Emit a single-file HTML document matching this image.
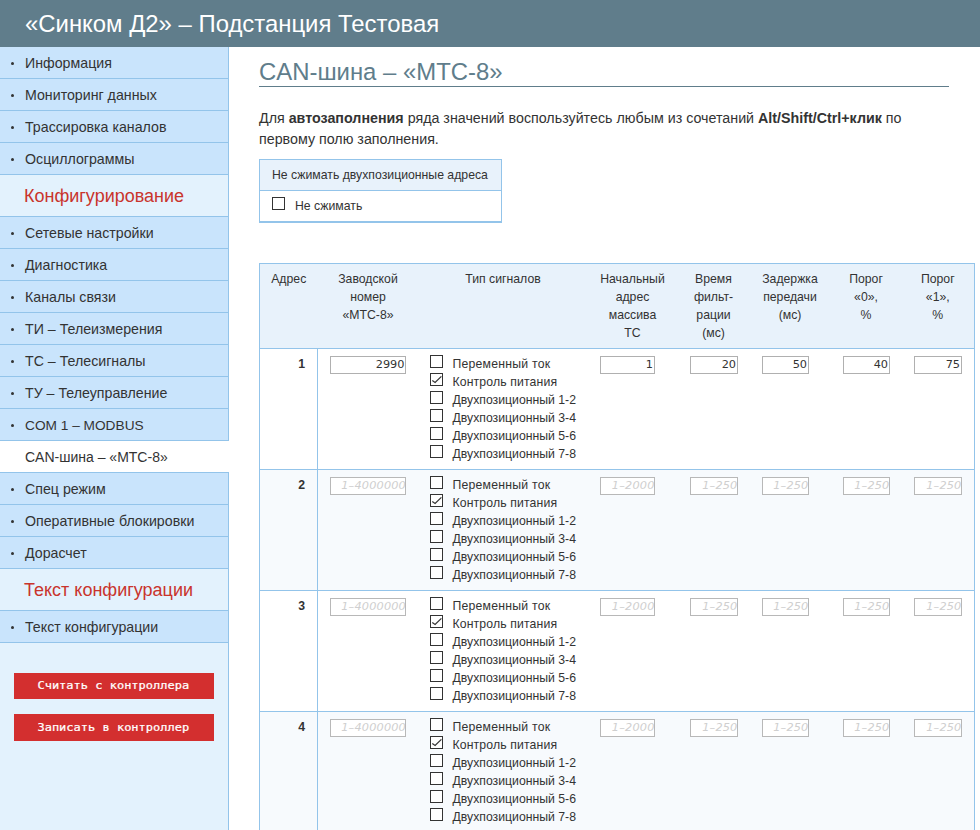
<!DOCTYPE html>
<html lang="ru">
<head>
<meta charset="utf-8">
<title>«Синком Д2» – Подстанция Тестовая</title>
<style>
*{box-sizing:border-box;}
html,body{margin:0;padding:0;}
body{width:980px;height:830px;overflow:hidden;background:#fff;color:#333;
  font-family:"Liberation Sans",Arial,sans-serif;font-size:14.2px;position:relative;}
#hdr{position:absolute;left:0;top:0;width:980px;height:47px;background:#607d8b;color:#fff;
  font-size:23.9px;line-height:47px;padding-left:25px;white-space:nowrap;}
#side{position:absolute;left:0;top:47px;width:229px;height:783px;background:#e3f2fd;border-right:1px solid #93c4ea;}
#side ul{list-style:none;margin:0;padding:0;}
#side li{height:32px;line-height:33px;border-bottom:1px solid #93c4ea;background:#c9e4fc;padding-left:25px;position:relative;white-space:nowrap;color:#333;}
#side li:before{content:"";position:absolute;left:10.8px;top:14.8px;width:3.4px;height:3.4px;border-radius:1.7px;background:#333;}
#side li.act{background:#fff;width:229px;font-size:14px;}
#side li.act:before{display:none;}
#side h3{margin:0;height:42px;line-height:43px;border-bottom:1px solid #93c4ea;font-weight:normal;font-size:18px;color:#c9342c;padding-left:24px;white-space:nowrap;}
.btn{position:absolute;left:14px;width:200px;height:26px;background:#d32f2f;color:#fff;font-family:"DejaVu Sans Mono","Liberation Mono",monospace;font-size:12px;line-height:26px;text-align:center;white-space:pre;}
#main{position:absolute;left:259px;top:47px;width:721px;}
h1{position:absolute;left:0;top:11px;width:690px;margin:0;font-weight:normal;font-size:23.9px;line-height:28px;color:#607d8b;border-bottom:1px solid #607d8b;height:29px;white-space:nowrap;}
p.hint{position:absolute;left:0;top:61px;margin:0;width:720px;white-space:nowrap;line-height:21px;font-size:14.28px;}
.box{position:absolute;left:0;top:112px;width:243px;height:64px;border:1px solid #93c4ea;border-bottom-width:2px;font-size:12.25px;}
.box .t{height:31px;line-height:30px;background:#e8f2fb;border-bottom:1px solid #93c4ea;padding-left:12px;white-space:nowrap;}
.box .b{height:30px;line-height:30px;padding-left:35px;position:relative;}
.cb{position:absolute;width:13px;height:13px;border:1px solid #333;background:#fff;}
table{position:absolute;left:0;top:216px;border-collapse:collapse;font-size:12.25px;line-height:18px;border:1px solid #93c4ea;}
th{font-weight:normal;background:#e8f2fb;vertical-align:top;padding:6px 0;height:85px;text-align:center;}
td{vertical-align:top;padding:6px 0 6px 12px;height:121px;border-top:1px solid #93c4ea;text-align:left;}
tr.alt td{background:#f7fafd;}
td.n{font-weight:bold;text-align:right;padding:6px 12px 6px 0;border-right:1px solid #93c4ea;}
.in{display:block;height:18px;margin-top:1px;border:1px solid #b0b0b0;background:#fff;font-family:"DejaVu Sans","Liberation Sans",sans-serif;font-size:11.3px;line-height:15px;text-align:right;padding-right:1px;color:#333;white-space:nowrap;overflow:hidden;}
.in.ph{color:#cfcfcf;font-style:italic;border-color:#b8b8b8;letter-spacing:0.18px;padding-right:0;}
.m{font-style:inherit;position:relative;left:0.5px;}
.ph .m{left:1px;}
.btn .m{display:inline-block;-webkit-text-stroke:0.25px #fff;transform:translate(-1.2px,-1px) scaleY(0.9);transform-origin:50% 72%;}
.sig{position:relative;padding-left:22px;height:18px;white-space:nowrap;}
.sig .cb{left:-1px;top:0px;}
.sig:nth-child(1){letter-spacing:0.22px;}
.sig:nth-child(2){letter-spacing:0.13px;}
.cb svg{position:absolute;left:0;top:0;}
</style>
</head>
<body>
<div id="hdr">«Синком Д2» – Подстанция Тестовая</div>
<div id="side">
<ul>
<li>Информация</li>
<li>Мониторинг данных</li>
<li>Трассировка каналов</li>
<li>Осциллограммы</li>
</ul>
<h3>Конфигурирование</h3>
<ul>
<li>Сетевые настройки</li>
<li>Диагностика</li>
<li>Каналы связи</li>
<li>ТИ – Телеизмерения</li>
<li>ТС – Телесигналы</li>
<li>ТУ – Телеуправление</li>
<li><span style="font-size:13.7px">COM 1 – MODBUS</span></li>
<li class="act">CAN-шина – «МТС-8»</li>
<li>Спец режим</li>
<li>Оперативные блокировки</li>
<li>Дорасчет</li>
</ul>
<h3>Текст конфигурации</h3>
<ul>
<li>Текст конфигурации</li>
</ul>
<div class="btn" style="top:626px"><i class="m">Считать с контроллера</i></div>
<div class="btn" style="top:667px;height:27px;line-height:29px"><i class="m">Записать в контроллер</i></div>
</div>
<div id="main">
<h1>CAN-шина – «МТС-8»</h1>
<p class="hint">Для <b>автозаполнения</b> ряда значений воспользуйтесь любым из сочетаний <b>Alt/Shift/Ctrl+клик</b> по<br>первому полю заполнения.</p>
<div class="box"><div class="t">Не сжимать двухпозиционные адреса</div><div class="b"><span class="cb" style="left:12px;top:6px"></span>Не сжимать</div></div>
<table>
<colgroup><col style="width:58px"><col style="width:101px"><col style="width:169px"><col style="width:90px"><col style="width:72px"><col style="width:81px"><col style="width:71px"><col style="width:73px"></colgroup>
<tr><th>Адрес</th><th>Заводской<br>номер<br>«МТС-8»</th><th>Тип сигналов</th><th>Начальный<br>адрес<br>массива<br>ТС</th><th>Время<br>фильт-<br>рации<br>(мс)</th><th>Задержка<br>передачи<br>(мс)</th><th>Порог<br>«0»,<br>%</th><th>Порог<br>«1»,<br>%</th></tr>
<tr><td class="n">1</td><td><span class="in" style="width:76px"><i class="m">2990</i></span></td><td><div class="sig"><span class="cb"></span>Переменный ток</div><div class="sig"><span class="cb"><svg width="11" height="11" viewBox="0 0 11 11"><path d="M1.3 6.5 L4.1 8.4 L10.4 2.4" fill="none" stroke="#333" stroke-width="1.25"/></svg></span>Контроль питания</div><div class="sig"><span class="cb"></span>Двухпозиционный 1-2</div><div class="sig"><span class="cb"></span>Двухпозиционный 3-4</div><div class="sig"><span class="cb"></span>Двухпозиционный 5-6</div><div class="sig"><span class="cb"></span>Двухпозиционный 7-8</div></td><td><span class="in" style="width:55px"><i class="m">1</i></span></td><td><span class="in" style="width:48px"><i class="m">20</i></span></td><td><span class="in" style="width:47px"><i class="m">50</i></span></td><td><span class="in" style="width:47px"><i class="m">40</i></span></td><td><span class="in" style="width:48px"><i class="m">75</i></span></td></tr>
<tr class="alt"><td class="n">2</td><td><span class="in ph" style="width:76px"><i class="m">1–4000000</i></span></td><td><div class="sig"><span class="cb"></span>Переменный ток</div><div class="sig"><span class="cb"><svg width="11" height="11" viewBox="0 0 11 11"><path d="M1.3 6.5 L4.1 8.4 L10.4 2.4" fill="none" stroke="#333" stroke-width="1.25"/></svg></span>Контроль питания</div><div class="sig"><span class="cb"></span>Двухпозиционный 1-2</div><div class="sig"><span class="cb"></span>Двухпозиционный 3-4</div><div class="sig"><span class="cb"></span>Двухпозиционный 5-6</div><div class="sig"><span class="cb"></span>Двухпозиционный 7-8</div></td><td><span class="in ph" style="width:55px"><i class="m">1–2000</i></span></td><td><span class="in ph" style="width:48px"><i class="m">1–250</i></span></td><td><span class="in ph" style="width:47px"><i class="m">1–250</i></span></td><td><span class="in ph" style="width:47px"><i class="m">1–250</i></span></td><td><span class="in ph" style="width:48px"><i class="m">1–250</i></span></td></tr>
<tr><td class="n">3</td><td><span class="in ph" style="width:76px"><i class="m">1–4000000</i></span></td><td><div class="sig"><span class="cb"></span>Переменный ток</div><div class="sig"><span class="cb"><svg width="11" height="11" viewBox="0 0 11 11"><path d="M1.3 6.5 L4.1 8.4 L10.4 2.4" fill="none" stroke="#333" stroke-width="1.25"/></svg></span>Контроль питания</div><div class="sig"><span class="cb"></span>Двухпозиционный 1-2</div><div class="sig"><span class="cb"></span>Двухпозиционный 3-4</div><div class="sig"><span class="cb"></span>Двухпозиционный 5-6</div><div class="sig"><span class="cb"></span>Двухпозиционный 7-8</div></td><td><span class="in ph" style="width:55px"><i class="m">1–2000</i></span></td><td><span class="in ph" style="width:48px"><i class="m">1–250</i></span></td><td><span class="in ph" style="width:47px"><i class="m">1–250</i></span></td><td><span class="in ph" style="width:47px"><i class="m">1–250</i></span></td><td><span class="in ph" style="width:48px"><i class="m">1–250</i></span></td></tr>
<tr class="alt"><td class="n">4</td><td><span class="in ph" style="width:76px"><i class="m">1–4000000</i></span></td><td><div class="sig"><span class="cb"></span>Переменный ток</div><div class="sig"><span class="cb"><svg width="11" height="11" viewBox="0 0 11 11"><path d="M1.3 6.5 L4.1 8.4 L10.4 2.4" fill="none" stroke="#333" stroke-width="1.25"/></svg></span>Контроль питания</div><div class="sig"><span class="cb"></span>Двухпозиционный 1-2</div><div class="sig"><span class="cb"></span>Двухпозиционный 3-4</div><div class="sig"><span class="cb"></span>Двухпозиционный 5-6</div><div class="sig"><span class="cb"></span>Двухпозиционный 7-8</div></td><td><span class="in ph" style="width:55px"><i class="m">1–2000</i></span></td><td><span class="in ph" style="width:48px"><i class="m">1–250</i></span></td><td><span class="in ph" style="width:47px"><i class="m">1–250</i></span></td><td><span class="in ph" style="width:47px"><i class="m">1–250</i></span></td><td><span class="in ph" style="width:48px"><i class="m">1–250</i></span></td></tr>
</table>
</div>
</body>
</html>
